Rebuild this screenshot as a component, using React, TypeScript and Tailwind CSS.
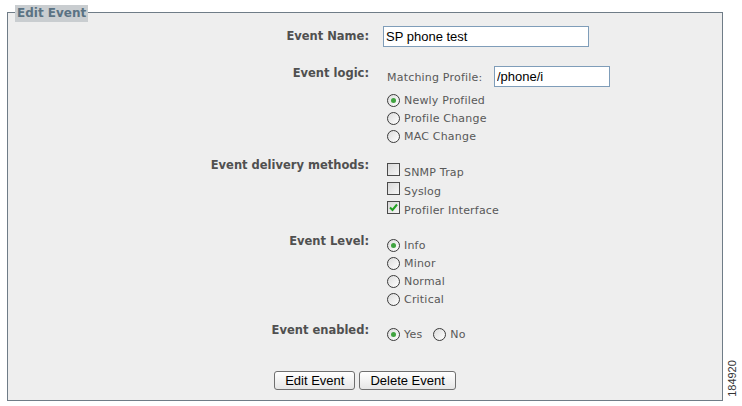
import React from "react";

const label = "w-[361px] text-right text-[11.5px] font-bold leading-[13px] text-[#505050]";
const opt = "text-[11px] tracking-[0.2px] leading-[13px] text-[#585858]";
const btn =
  "h-[19px] rounded-[3px] border border-[#6f6f6f] bg-gradient-to-b from-white to-[#e6e6e6] px-[10px] font-['Liberation_Sans',Arial,sans-serif] text-[13px] leading-[17px] text-black";

function Radio({ checked }: { checked?: boolean }) {
  return (
    <span className="flex h-[13px] w-[13px] shrink-0 items-center justify-center rounded-full border border-[#3a3a3a] bg-gradient-to-br from-[#dcdcdc] to-white">
      {checked && <span className="h-[5px] w-[5px] rounded-full bg-[#3fa33f]" />}
    </span>
  );
}

function Check({ checked }: { checked?: boolean }) {
  return (
    <span className="flex h-[13px] w-[13px] shrink-0 items-center justify-center border border-[#4a4a4a] bg-gradient-to-br from-[#d8d8d8] to-[#f6f6f6]">
      {checked && (
        <svg width="9" height="9" viewBox="0 0 9 9">
          <path d="M1 4.5 L3.5 7 L8 1.5" fill="none" stroke="#23a123" strokeWidth="2" />
        </svg>
      )}
    </span>
  );
}

function RadioRow({ text, checked }: { text: string; checked?: boolean }) {
  return (
    <div className="flex h-[18px] items-center gap-[4px] pl-[4px]">
      <Radio checked={checked} />
      <span className={opt}>{text}</span>
    </div>
  );
}

function CheckRow({ text, checked }: { text: string; checked?: boolean }) {
  return (
    <div className="flex h-[19px] items-start gap-[4px] pl-[4px]">
      <Check checked={checked} />
      <span className={opt + " pt-[3px]"}>{text}</span>
    </div>
  );
}

export default function App() {
  return (
    <div className="relative h-[406px] w-[742px] overflow-hidden bg-white font-['DejaVu_Sans',Verdana,sans-serif]">
      <div className="relative ml-[7px] mt-[12px] h-[389px] w-[716px] border border-[#6f7c87] bg-[#eeeeee]">
        <div className="absolute left-[7px] top-[-8px] bg-[#c9cdd0] px-[2px] text-[12px] font-bold leading-[17px] text-[#5a7283]">
          Edit Event
        </div>

        <div className="pt-[13px]">
          {/* name */}
          <div className="flex">
            <div className={label + " pt-[4px]"}>Event Name:</div>
            <input
              readOnly
              value="SP phone test"
              className="ml-[14px] h-[21px] w-[206px] border border-[#7f9db9] bg-white px-[2px] font-['Liberation_Sans',Arial,sans-serif] text-[13px] text-black outline-none"
            />
          </div>

          {/* logic */}
          <div className="mt-[19px] flex">
            <div className={label + " pt-[1px]"}>Event logic:</div>
            <div className="ml-[14px]">
              <div className="flex items-center">
                <span className={opt + " w-[111px] pl-[4px] pt-[2px]"}>Matching Profile:</span>
                <input
                  readOnly
                  value="/phone/i"
                  className="h-[21px] w-[116px] border border-[#7f9db9] bg-white px-[2px] font-['Liberation_Sans',Arial,sans-serif] text-[13px] text-black outline-none"
                />
              </div>
              <div className="mt-[4px]">
                <RadioRow text="Newly Profiled" checked />
                <RadioRow text="Profile Change" />
                <RadioRow text="MAC Change" />
              </div>
            </div>
          </div>

          {/* delivery */}
          <div className="mt-[14px] flex">
            <div className={label}>Event delivery methods:</div>
            <div className="ml-[14px] pt-[4px]">
              <CheckRow text="SNMP Trap" />
              <CheckRow text="Syslog" />
              <CheckRow text="Profiler Interface" checked />
            </div>
          </div>

          {/* level */}
          <div className="mt-[15px] flex">
            <div className={label}>Event Level:</div>
            <div className="ml-[14px] pt-[1px]">
              <RadioRow text="Info" checked />
              <RadioRow text="Minor" />
              <RadioRow text="Normal" />
              <RadioRow text="Critical" />
            </div>
          </div>

          {/* enabled */}
          <div className="mt-[16px] flex">
            <div className={label}>Event enabled:</div>
            <div className="ml-[14px] flex pt-[1px]">
              <RadioRow text="Yes" checked />
              <div className="ml-[7px]">
                <RadioRow text="No" />
              </div>
            </div>
          </div>

          {/* buttons */}
          <div className="mt-[28px] flex justify-center gap-[4px]">
            <button className={btn}>Edit Event</button>
            <button className={btn}>Delete Event</button>
          </div>
        </div>
      </div>

      <div className="absolute left-[710px] top-[372px] w-[44px] -rotate-90 text-center font-['Liberation_Sans',Arial,sans-serif] text-[11px] leading-[13px] text-[#333]">
        184920
      </div>
    </div>
  );
}
